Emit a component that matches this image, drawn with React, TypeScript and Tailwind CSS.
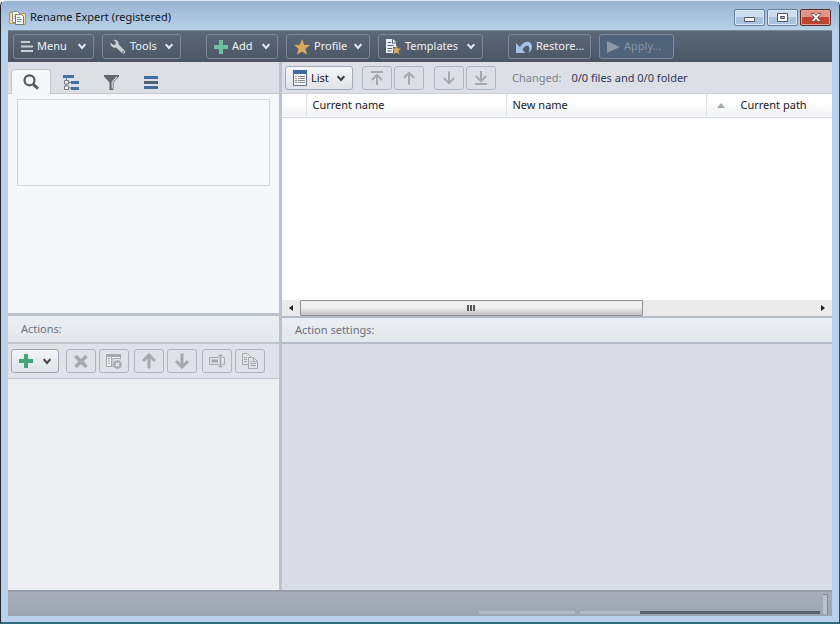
import type { ReactNode } from 'react';
import { clsx } from 'clsx';

type IconProps = { className?: string };

const Chevron = ({ className }: IconProps) => (
  <svg viewBox="0 0 8 7" className={clsx('h-[7px] w-2 shrink-0', className)} fill="none" stroke="currentColor" strokeWidth="2">
    <path d="M.7 1.2 4 4.9l3.3-3.7" />
  </svg>
);

const Plus = ({ className }: IconProps) => (
  <svg viewBox="0 0 14 14" className={clsx('h-3.5 w-3.5 shrink-0', className)} fill="currentColor">
    <path d="M5 0h4v5h5v4H9v5H5V9H0V5h5z" />
  </svg>
);

const AppIcon = () => (
  <svg viewBox="0 0 17 16" className="h-4 w-[17px] shrink-0">
    <path d="M.5 2.5h5v11h-5z" fill="#f3dda0" stroke="#b59a55" />
    <path d="M11.5 3.5h5v11h-5z" fill="#f3dda0" stroke="#b59a55" />
    <path d="M3.5 1.5h5l2 2v9h-7z" fill="#fff" stroke="#8c8a80" />
    <path d="M5 4.5h4M5 6.5h3M5 8.5h3" stroke="#a9a28a" />
    <path d="M6.5 4.5h6l2 2v8h-8z" fill="#fff" stroke="#77797c" />
    <path d="M8 7.5h3M8 9.5h5M8 11.5h4" stroke="#7891ad" />
  </svg>
);

const MenuIcon = () => (
  <svg viewBox="0 0 12 11" className="h-[11px] w-3 shrink-0" fill="#c9ced4">
    <path d="M0 0h9v2H0zM0 4.5h12v2H0zM0 9h12v2H0z" />
  </svg>
);

const WrenchIcon = () => (
  <svg viewBox="0 0 17 16" className="h-4 w-4 shrink-0">
    <path
      d="M.6 3.2 3.5 5.8l2.2-.5.6-2.300L3.600.5C6.500-.4 9.600 1.800 9.300 5.300l6.200 6.300c1.900 1.900-.8 4.700-2.800 2.800L6.500 8.500C3.300 9.400-.2 6.800.6 3.200z"
      fill="#c9ced4"
    />
    <circle cx="13.9" cy="13.1" r=".9" fill="#54606f" />
  </svg>
);

const StarIcon = () => (
  <svg viewBox="0 0 16 16" className="h-4 w-4 shrink-0" fill="#dba95c">
    <path d="m8 0 2.200 5.700 5.800.3-4.500 3.800L13 15.700 8 12.400l-5 3.300 1.500-5.900L0 6l5.800-.3z" />
  </svg>
);

const TemplatesIcon = () => (
  <svg viewBox="0 0 15 16" className="h-4 w-[15px] shrink-0">
    <path d="M0 0h6v4.500h4V8H7v6H0z" fill="#eef1f4" />
    <path d="M7 0l3.500 3.500H7z" fill="#eef1f4" />
    <path d="M1.500 3.500H5M1.500 6.500h6M1.500 9.500H6M1.500 12h4" stroke="#54606f" />
    <path d="m10.500 6.300 1.300 3.200 3.200.2-2.500 2.100.9 3.500-2.900-1.900-3 1.900.9-3.500L6 9.700l3.200-.2z" fill="#dba95c" />
  </svg>
);

const RestoreIcon = () => (
  <svg viewBox="0 0 16 12" className="h-3 w-4 shrink-0" fill="#a5c1e6">
    <path d="M0 2v10h9.500z" />
    <path d="M3 8C5 3.500 8 .8 11.200.8c3 0 4.800 2.200 4.800 5 0 2.600-1.300 4.700-3.500 6 .5-1.400.8-2.600.8-4 0-2-1-3.200-2.500-3C8.700 5 7 7.500 6 10z" />
  </svg>
);

const PlayIcon = () => (
  <svg viewBox="0 0 13 12" className="h-3 w-[13px] shrink-0" fill="#8e99a5">
    <path d="M0 0l13 6-13 6z" />
  </svg>
);

const SearchIcon = () => (
  <svg viewBox="0 0 16 16" className="h-4 w-4" fill="none" stroke="#55585c">
    <circle cx="6.5" cy="6.3" r="5" strokeWidth="2.2" />
    <path d="m10.300 10.200 4.700 4.600" strokeWidth="3" />
  </svg>
);

const TreeIcon = () => (
  <svg viewBox="0 0 16 15" className="h-[15px] w-4" fill="none">
    <path d="M0 0h11v3H0zM8 6h8v3H8zM8 12h8v3H8z" fill="#4271a4" />
    <path d="M3.500 3v2M3.500 9v2M5 7.500h3M5 13h3" stroke="#71767c" />
    <path d="M1.500 5.500h4v3.500h-4zM1.500 11h4v3.500h-4z" fill="#fff" stroke="#71767c" />
  </svg>
);

const FilterIcon = () => (
  <svg viewBox="0 0 15 15" className="h-[15px] w-[15px]">
    <path d="M0 0h15v1.500L9.500 7.500V15h-4V7.500L0 1.500z" fill="#63676c" />
    <path d="M13 1.800 8.200 7v6.500" stroke="#d6d9dd" fill="none" strokeWidth="1.2" />
  </svg>
);

const LinesIcon = () => (
  <svg viewBox="0 0 14 13" className="h-[13px] w-3.5">
    <path d="M0 0h14v3H0zM0 10h14v3H0z" fill="#3f6da3" />
    <path d="M0 5h14v3H0z" fill="#53606f" />
  </svg>
);

const ListIcon = () => (
  <svg viewBox="0 0 14 16" className="h-4 w-3.5 shrink-0">
    <path d="M.5.5h13v15H.5z" fill="#fff" stroke="#5a6f87" />
    <path d="M0 0h14v4H0z" fill="#3f6c9c" />
    <path d="M2 6.500h2M2 8.500h2M2 10.500h2M2 12.500h2M5 6.500h7M5 8.500h7M5 10.500h7M5 12.500h7" stroke="#7c838b" />
  </svg>
);

const ArrowIcon = ({ down, bar, bold }: { down?: boolean; bar?: boolean; bold?: boolean }) => (
  <svg
    viewBox="0 0 14 14"
    className={clsx(bold ? 'h-4 w-4' : 'h-3.5 w-3.5', down && 'rotate-180')}
    fill="none"
    stroke="currentColor"
    strokeWidth={bold ? 2.6 : 2}
  >
    {bar && <path d="M1 1h12" />}
    <path d={bar ? 'M7 14V4M1.800 9 7 3.800 12.200 9' : 'M7 13.500V2M1.800 7 7 1.800 12.200 7'} />
  </svg>
);

const DeleteIcon = () => (
  <svg viewBox="0 0 14 13" className="h-[13px] w-3.5" stroke="currentColor" strokeWidth="3.6">
    <path d="m1.500 1 11 11m0-11-11 11" />
  </svg>
);

const ClearListIcon = () => (
  <svg viewBox="0 0 16 16" className="h-4 w-4" fill="none" stroke="currentColor">
    <path d="M14.500 6.500v-5H.5v12H7V5.500h7.500V1.500" fill="#eceef1" />
    <path d="M0 1h15v3H0z" fill="currentColor" stroke="none" />
    <path d="M5.500 3v10.500M2 5.500h2M2 8h2M2 10.500h2" />
    <circle cx="11.5" cy="11.5" r="4.3" fill="currentColor" stroke="none" />
    <path d="m9.800 9.800 3.400 3.400m0-3.400-3.400 3.400" stroke="#e9ebef" strokeWidth="1.3" />
  </svg>
);

const RenameIcon = () => (
  <svg viewBox="0 0 16 14" className="h-3.5 w-4" fill="none" stroke="currentColor">
    <path d="M10 3.500H.5v7H10M13.500 3.500h2v7h-2" />
    <path d="M2.500 7H9" strokeWidth="3" />
    <path d="M9.500 1.500h4M9.500 12.500h4M11.500 1.500v11" strokeWidth="1.6" />
  </svg>
);

const CopyIcon = () => (
  <svg viewBox="0 0 16 16" className="h-4 w-4" fill="none" stroke="currentColor">
    <path d="M6 11.500H.5v-11h5l3 3M2 4.500h3M2 6.500h3M2 8.500h3" />
    <path d="M6.500 4.500h5l4 4v7h-9z" />
    <path d="M11.500 4.500v4h4M8.500 8.500h2M8.500 10.500H14M8.500 12.500H14" />
  </svg>
);

const mainGroups = [
  [
    { label: 'Menu', icon: <MenuIcon />, width: 'w-[81px]', menu: true },
    { label: 'Tools', icon: <WrenchIcon />, width: 'w-[79px]', menu: true },
  ],
  [
    { label: 'Add', icon: <Plus className="text-[#6cc09b]" />, width: 'w-[72px]', menu: true },
    { label: 'Profile', icon: <StarIcon />, width: 'w-[84px]', menu: true },
    { label: 'Templates', icon: <TemplatesIcon />, width: 'w-[105px]', menu: true },
  ],
  [
    { label: 'Restore...', icon: <RestoreIcon />, width: 'w-[83px]' },
    { label: 'Apply...', icon: <PlayIcon />, width: 'w-[75px]', disabled: true },
  ],
];

const tabs = [
  { label: 'Search', icon: <SearchIcon /> },
  { label: 'Tree', icon: <TreeIcon /> },
  { label: 'Filter', icon: <FilterIcon /> },
  { label: 'Lines', icon: <LinesIcon /> },
];

const moveGroups = [
  [
    { label: 'Move to top', icon: <ArrowIcon bar /> },
    { label: 'Move up', icon: <ArrowIcon /> },
  ],
  [
    { label: 'Move down', icon: <ArrowIcon down /> },
    { label: 'Move to bottom', icon: <ArrowIcon down bar /> },
  ],
];

const actionGroups = [
  [
    { label: 'Delete action', icon: <DeleteIcon /> },
    { label: 'Clear actions', icon: <ClearListIcon /> },
  ],
  [
    { label: 'Action up', icon: <ArrowIcon bold /> },
    { label: 'Action down', icon: <ArrowIcon bold down /> },
  ],
  [
    { label: 'Rename action', icon: <RenameIcon /> },
    { label: 'Copy action', icon: <CopyIcon /> },
  ],
];

const ToolButton = ({ label, children }: { label: string; children: ReactNode }) => (
  <button
    aria-label={label}
    disabled
    className="flex h-6 w-[30px] items-center justify-center rounded-[3px] border border-[#b0b4bc] text-[#a5a8ad]"
  >
    {children}
  </button>
);

const captionButton =
  'flex h-[17px] w-[31px] items-center justify-center rounded-[2px] border border-[#647c99] bg-linear-to-b from-[#cbdcef] from-50% to-[#a9c2dd] to-50% shadow-[inset_0_0_0_1px_#dce9f6]';

const TitleBar = () => (
  <header className="flex h-[29px] shrink-0 items-center justify-between bg-linear-to-b from-[#98b4d3] to-[#b9cfe8] px-2 pt-1">
    <div className="flex items-center gap-1">
      <AppIcon />
      <h1 className="text-[#111820]">Rename Expert (registered)</h1>
    </div>
    <div className="flex gap-0.5">
      <button aria-label="Minimize" className={captionButton}>
        <svg viewBox="0 0 11 5" className="mt-1 h-[5px] w-[11px]">
          <path d="M.5.5h10v4H.5z" fill="#fff" stroke="#50565f" />
        </svg>
      </button>
      <button aria-label="Maximize" className={captionButton}>
        <svg viewBox="0 0 11 9" className="h-[9px] w-[11px]">
          <path d="M.5.5h10v8H.5z" fill="#fff" stroke="#50565f" />
          <path d="M3.500 3.500h4v2h-4z" fill="#a9c2dd" stroke="#50565f" />
        </svg>
      </button>
      <button
        aria-label="Close"
        className="flex h-[17px] w-[31px] items-center justify-center rounded-[2px] border border-[#5b2a2c] bg-linear-to-b from-[#dc9587] from-50% to-[#c1432f] to-50% shadow-[inset_0_0_0_1px_#e0a399]"
      >
        <svg viewBox="0 0 12 9" className="h-[9px] w-3">
          <path d="m1 .5h3L6 2.700 8 .5h3L7.700 4.500 11 8.500H8L6 6.300 4 8.500H1l3.300-4z" fill="#fff" stroke="#5e4a50" strokeWidth=".8" />
        </svg>
      </button>
    </div>
  </header>
);

const MainToolbar = () => (
  <nav className="flex h-8 shrink-0 items-center gap-[25px] border-t border-[#7b8a9b] bg-linear-to-b from-[#5c6979] to-[#4a5664] pl-[5px]">
    {mainGroups.map((group, i) => (
      <div key={i} className="flex gap-2">
        {group.map((item) => (
          <button
            key={item.label}
            disabled={item.disabled}
            className={clsx(
              'flex h-[25px] items-center gap-1 rounded-[3px] border px-[7px] whitespace-nowrap',
              item.width,
              item.disabled ? 'border-[#7d8b9a] bg-[#50637a] text-[#8794a3]' : 'border-[#7d8894] text-[#eef1f4]',
            )}
          >
            {item.icon}
            {item.label}
            {item.menu && <Chevron className="ml-auto text-[#dfe8f2]" />}
          </button>
        ))}
      </div>
    ))}
  </nav>
);

const SearchPanel = () => (
  <section className="flex h-[251px] shrink-0 flex-col">
    <div role="tablist" className="flex h-8 shrink-0 items-end border-b border-[#c5cad1] bg-[#dcdfe5] pl-[3px]">
      {tabs.map((tab, i) => (
        <button
          key={tab.label}
          role="tab"
          aria-label={tab.label}
          aria-selected={i === 0}
          className={clsx(
            'flex w-10 items-center justify-center',
            i === 0 ? '-mb-px h-[25px] rounded-t-[3px] border border-b-0 border-[#c2c7ce] bg-[#f5f7f9]' : 'h-[21px]',
          )}
        >
          {tab.icon}
        </button>
      ))}
    </div>
    <div className="flex-1 bg-[#f5f7fa] px-[9px] pt-[5px]">
      <textarea aria-label="Search" className="block h-[87px] w-full resize-none border border-[#d3d6da] bg-[#f7f8fa] p-1 outline-none" />
    </div>
  </section>
);

const ActionsPanel = () => (
  <section className="flex flex-1 flex-col border-t-3 border-[#bcc2cc] bg-[#eeeff2]">
    <h2 className="flex h-[26px] shrink-0 items-center bg-linear-to-b from-[#ebeef2] to-[#e4e7ec] pl-[13px] text-[#6a7280]">Actions:</h2>
    <div className="flex h-[37px] shrink-0 items-center gap-[5px] border-t-2 border-b border-[#bfc4cd] bg-[#dfe2e9] pl-[3px]">
      <button
        aria-label="Add action"
        className="mr-0.5 flex h-6 w-12 items-center justify-between rounded-[3px] border border-[#9da5b1] bg-linear-to-b from-[#f3f5f7] to-[#dfe3e8] px-[7px]"
      >
        <Plus className="text-[#46a67b]" />
        <Chevron className="text-[#3c4148]" />
      </button>
      {actionGroups.map((group, i) => (
        <div key={i} className="flex gap-[3px]">
          {group.map((item) => (
            <ToolButton key={item.label} label={item.label}>
              {item.icon}
            </ToolButton>
          ))}
        </div>
      ))}
    </div>
  </section>
);

const FilesPanel = () => (
  <section className="flex h-[254px] shrink-0 flex-col bg-white">
    <div className="flex h-8 shrink-0 items-center border-b border-[#cfd3d9] bg-[#dcdfe5] pt-px pl-[3px]">
      <button className="mr-[9px] flex h-6 w-[68px] items-center gap-1 rounded-[3px] border border-[#a3abb6] bg-linear-to-b from-[#f5f6f8] to-[#dfe3e8] px-[7px] text-[#15181c]">
        <ListIcon />
        List
        <Chevron className="ml-auto text-[#3c4148]" />
      </button>
      <div className="flex gap-2.5">
        {moveGroups.map((group, i) => (
          <div key={i} className="flex gap-0.5">
            {group.map((item) => (
              <ToolButton key={item.label} label={item.label}>
                {item.icon}
              </ToolButton>
            ))}
          </div>
        ))}
      </div>
      <p className="ml-4 flex gap-2.5 text-[#33385a]">
        <span className="text-[#7d8390]">Changed:</span>
        <span>0/0 files and 0/0 folder</span>
      </p>
    </div>
    <div className="flex-1">
      <table className="w-full table-fixed border-collapse text-left text-[#15181c]">
        <thead>
          <tr className="h-[23px] border-b border-[#cfd3d8] bg-linear-to-b from-white from-40% to-[#f1f2f4]">
            <th className="w-6 border-r border-[#dfe2e6]" aria-label="Selected" />
            <th className="w-[200px] border-r border-[#dfe2e6] pl-1.5 font-normal">Current name</th>
            <th className="w-[200px] border-r border-[#dfe2e6] pl-1.5 font-normal">New name</th>
            <th className="font-normal">
              <div className="flex items-center gap-4 pl-2.5 whitespace-nowrap">
                <svg viewBox="0 0 8 5" className="h-[5px] w-2" fill="#9fa9a9">
                  <path d="m4 0 4 5H0z" />
                </svg>
                Current path
              </div>
            </th>
          </tr>
        </thead>
        <tbody />
      </table>
    </div>
    <div className="flex h-4 shrink-0 bg-[#ebebec]">
      <button aria-label="Scroll left" className="flex w-[18px] items-center justify-center">
        <svg viewBox="0 0 4 6" className="h-1.5 w-1" fill="#222">
          <path d="M4 0v6L0 3z" />
        </svg>
      </button>
      <div className="flex-1">
        <div className="flex h-full w-2/3 items-center justify-center gap-px rounded-[1px] border border-[#8f9294] bg-linear-to-b from-[#f1f1f1] from-45% to-[#c2c3c5]">
          <span className="h-1.5 w-0.5 bg-[#55585a]" />
          <span className="h-1.5 w-0.5 bg-[#55585a]" />
          <span className="h-1.5 w-0.5 bg-[#55585a]" />
        </div>
      </div>
      <button aria-label="Scroll right" className="flex w-[18px] items-center justify-center">
        <svg viewBox="0 0 4 6" className="h-1.5 w-1" fill="#222">
          <path d="M0 0v6l4-3z" />
        </svg>
      </button>
    </div>
  </section>
);

const SettingsPanel = () => (
  <section className="flex-1 border-t-2 border-[#b4bbc5] bg-[#d9dce4]">
    <h2 className="flex h-[26px] items-center border-b-2 border-[#b6bcc5] bg-linear-to-b from-[#ebeef2] to-[#e3e6eb] pl-[13px] text-[#6a7280]">
      Action settings:
    </h2>
  </section>
);

const StatusBar = () => (
  <footer className="flex h-[26px] shrink-0 items-end justify-end gap-[3px] border-t-2 border-[#979da8] bg-linear-to-b from-[#a8aeba] to-[#9ba5b0] pr-1 pb-0.5">
    <div className="mr-0.5 h-[3px] w-24 bg-[#b3bac3]" />
    <div className="flex h-[3px]">
      <div className="w-[60px] bg-[#b3bac3]" />
      <div className="w-[180px] bg-[#5b626b]" />
    </div>
    <div className="h-5 w-[5px] rounded-tr-[2px] border-t border-r border-[#808894] bg-[#bac1ca]" />
  </footer>
);

const App = () => {
  return (
    <div className="flex h-screen flex-col overflow-hidden rounded-t-[6px] border-t border-r border-b-2 border-l border-t-[#dfebf7] border-r-[#22505e] border-b-[#2f6d7e] border-l-[#20262c] bg-[#b9d1ea] font-['Noto_Sans','Open_Sans',sans-serif] text-[11px]">
      <TitleBar />
      <div className="mx-[7px] mb-1.5 flex flex-1 flex-col">
        <MainToolbar />
        <main className="flex flex-1">
          <div className="flex w-[271px] shrink-0 flex-col">
            <SearchPanel />
            <ActionsPanel />
          </div>
          <div className="w-[3px] shrink-0 bg-[#bcc2cd]" />
          <div className="flex min-w-0 flex-1 flex-col">
            <FilesPanel />
            <SettingsPanel />
          </div>
        </main>
        <StatusBar />
      </div>
    </div>
  );
};

export default App;
